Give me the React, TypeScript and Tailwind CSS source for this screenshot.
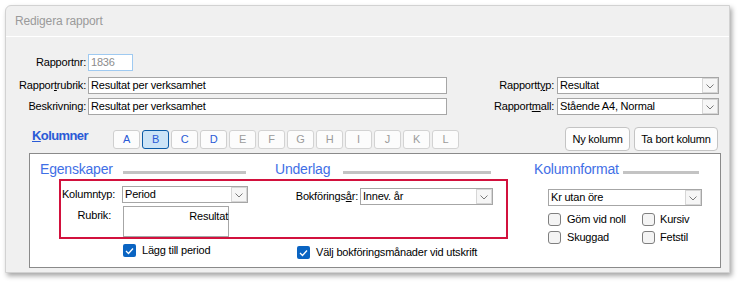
import React from "react";

const tabs = ["A", "B", "C", "D", "E", "F", "G", "H", "I", "J", "K", "L"];

function Chevron() {
  return (
    <svg width="8" height="5" viewBox="0 0 8 5" className="block">
      <polyline points="0.5,0.5 4,4 7.5,0.5" fill="none" stroke="#7a7a7a" strokeWidth="1" />
    </svg>
  );
}

function Combo({ text, width }: { text: string; width: string }) {
  return (
    <div className={`${width} flex h-[17px] items-center border border-[#a6a6a6] bg-white`}>
      <span className="flex-1 truncate pl-[2px] leading-[15px]">{text}</span>
      <div className="flex h-[15px] w-[16px] items-end justify-center border border-[#d6d6d6] bg-[#f6f6f6] pb-[3px]">
        <Chevron />
      </div>
    </div>
  );
}

function CheckBox({ checked }: { checked?: boolean }) {
  if (checked) {
    return (
      <div className="flex h-[13px] w-[13px] shrink-0 items-center justify-center rounded-[2px] bg-[#0a64c2]">
        <svg width="9" height="8" viewBox="0 0 9 8">
          <polyline points="1,4 3.5,6.5 8,1.5" fill="none" stroke="white" strokeWidth="1.3" />
        </svg>
      </div>
    );
  }
  return <div className="h-[13px] w-[13px] shrink-0 rounded-[3px] border border-[#7f7f7f] bg-[#f4f4f4]" />;
}

function Heading({ text, textWidth, lineWidth, offset }: { text: string; textWidth: string; lineWidth: string; offset: string }) {
  return (
    <div className={`${offset} flex items-center`}>
      <span className={`${textWidth} whitespace-nowrap text-[14px] leading-[16px] tracking-[-0.2px] text-[#3f6fe6]`}>{text}</span>
      <div className={`${lineWidth} mt-[6px] h-[3px] bg-[#c3c3c3]`} />
    </div>
  );
}

export default function App() {
  return (
    <div className="min-h-screen bg-white p-[5px] font-['Liberation_Sans',Arial,sans-serif] text-[11px] tracking-[-0.2px] text-black">
      <div className="h-[268px] w-[725px] rounded-tl-[6px] border border-[#d2d2d2] bg-[#f0f0f0] shadow-[2px_3px_5px_rgba(0,0,0,0.35)]">
        {/* title bar */}
        <div className="flex h-[30px] items-center pl-[9px] text-[12px] tracking-[-0.15px] text-[#9a9a9a]">
          Redigera rapport
        </div>
        <div className="h-px bg-white" />

        <div className="pt-[17px]">
          {/* Rapportnr */}
          <div className="flex h-[17px] items-center">
            <span className="w-[80px] text-right">Rapportnr:</span>
            <div className="ml-[2px] flex h-[17px] w-[45px] items-center border border-[#9fcaf1] bg-white pl-[2px] text-[#8c8c8c]">
              1836
            </div>
          </div>

          {/* Rapportrubrik / Rapporttyp */}
          <div className="mt-[6px] flex h-[17px] items-center">
            <span className="w-[80px] text-right">
              Rappor<span className="underline">t</span>rubrik:
            </span>
            <div className="ml-[2px] flex h-[17px] w-[359px] items-center border border-[#a6a6a6] bg-white pl-[2px]">
              Resultat per verksamhet
            </div>
            <span className="w-[107px] text-right">
              Rapportt<span className="underline">y</span>p:
            </span>
            <div className="ml-[3px]">
              <Combo text="Resultat" width="w-[162px]" />
            </div>
          </div>

          {/* Beskrivning / Rapportmall */}
          <div className="mt-[4px] flex h-[17px] items-center">
            <span className="w-[80px] text-right">Beskrivning:</span>
            <div className="ml-[2px] flex h-[17px] w-[359px] items-center border border-[#a6a6a6] bg-white pl-[2px]">
              Resultat per verksamhet
            </div>
            <span className="w-[107px] text-right">
              Rapport<span className="underline">m</span>all:
            </span>
            <div className="ml-[3px]">
              <Combo text="Stående A4, Normal" width="w-[162px]" />
            </div>
          </div>

          {/* Kolumner row */}
          <div className="mt-[12px] flex h-[24px] items-start">
            <span className="ml-[26px] mt-[1px] w-[81px] text-[13px] font-bold leading-[15px] tracking-[-0.6px] text-[#2a5ad6]">
              <span className="underline">K</span>olumner
            </span>
            <div className="mt-[3px] flex gap-[2px]">
              {tabs.map((t, i) => (
                <div
                  key={t}
                  className={
                    t === "B"
                      ? "flex h-[19px] w-[27px] items-center justify-center rounded-[3px] border border-[#0b5ba6] bg-[#cce4f7] text-[#2a5ad6]"
                      : i < 4
                      ? "flex h-[19px] w-[27px] items-center justify-center rounded-[3px] border border-[#cfcfcf] bg-[#fcfcfc] text-[#2a5ad6]"
                      : "flex h-[19px] w-[27px] items-center justify-center rounded-[3px] border border-[#d3d3d3] bg-[#fcfcfc] text-[#9b9b9b]"
                  }
                >
                  {t}
                </div>
              ))}
            </div>
            <div className="ml-auto mr-[11px] flex gap-[4px]">
              <button className="h-[24px] w-[65px] rounded-[4px] border border-[#c4c4c4] bg-[#fdfdfd]">Ny kolumn</button>
              <button className="h-[24px] w-[84px] rounded-[4px] border border-[#c4c4c4] bg-[#fdfdfd]">Ta bort kolumn</button>
            </div>
          </div>

          {/* panel */}
          <div className="ml-[23px] mt-[2px] h-[115px] w-[692px] border border-[#8a8a8a] bg-white">
            <div className="mt-[7px] flex h-[16px] items-center">
              <Heading text="Egenskaper" textWidth="w-[83px]" lineWidth="w-[123px]" offset="ml-[10px]" />
              <Heading text="Underlag" textWidth="w-[68px]" lineWidth="w-[148px]" offset="ml-[29px]" />
              <Heading text="Kolumnformat" textWidth="w-[89px]" lineWidth="w-[76px]" offset="ml-[43px]" />
            </div>

            <div className="flex items-start">
              <div className="ml-[29px] w-[449px]">
                <div className="mt-[2px] flex h-[60px] border-2 border-[#d2113d]">
                  <div className="w-[187px]">
                    <div className="mt-[5px] flex h-[17px] items-center">
                      <span className="w-[54px] text-right">Kolumntyp:</span>
                      <div className="ml-[7px]">
                        <Combo text="Period" width="w-[126px]" />
                      </div>
                    </div>
                    <div className="mt-[3px] flex items-start">
                      <span className="mt-[1px] w-[50px] text-right">Rubrik:</span>
                      <div className="ml-[12px] h-[31px] w-[106px] border border-[#a6a6a6] bg-white pt-[1px] text-right">
                        Resultat
                      </div>
                    </div>
                  </div>
                  <div className="mt-[7px] flex h-[17px] flex-1 items-center justify-end pr-[13px]">
                    <span>
                      Bokförings<span className="underline">å</span>r:
                    </span>
                    <div className="ml-[2px]">
                      <Combo text="Innev. år" width="w-[133px]" />
                    </div>
                  </div>
                </div>

                <div className="mt-[5px] flex items-start">
                  <div className="ml-[64px] flex w-[174px] items-center">
                    <CheckBox checked />
                    <span className="ml-[6px] leading-[13px]">Lägg till period</span>
                  </div>
                  <div className="mt-[2px] flex items-center">
                    <CheckBox checked />
                    <span className="ml-[6px] leading-[13px]">Välj bokföringsmånader vid utskrift</span>
                  </div>
                </div>
              </div>

              <div className="ml-[40px] mt-[12px] w-[154px]">
                <Combo text="Kr utan öre" width="w-[154px]" />
                <div className="mt-[7px] flex h-[13px] items-center">
                  <div className="flex w-[94px] items-center">
                    <CheckBox />
                    <span className="ml-[6px] leading-[13px]">Göm vid noll</span>
                  </div>
                  <div className="flex items-center">
                    <CheckBox />
                    <span className="ml-[5px] leading-[13px]">Kursiv</span>
                  </div>
                </div>
                <div className="mt-[5px] flex h-[13px] items-center">
                  <div className="flex w-[94px] items-center">
                    <CheckBox />
                    <span className="ml-[6px] leading-[13px]">Skuggad</span>
                  </div>
                  <div className="flex items-center">
                    <CheckBox />
                    <span className="ml-[5px] leading-[13px]">Fetstil</span>
                  </div>
                </div>
              </div>
            </div>
          </div>
        </div>
      </div>
    </div>
  );
}
